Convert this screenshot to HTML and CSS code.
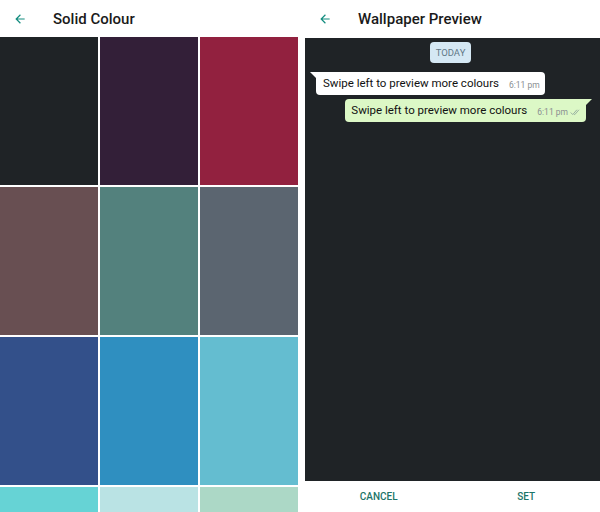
FILE: index.html
```html
<!DOCTYPE html>
<html lang="en">
<head>
	<meta charset="UTF-8">
	<title>Wallpaper</title>
	<link rel="stylesheet" href="styles.css">
</head>
<body>
	<div id="solid">
		<div class="appbar">
			<svg class="back" width="14" height="14" viewBox="0 0 24 24"><path d="M20 11H7.83l5.59-5.59L12 4l-8 8 8 8 1.41-1.41L7.83 13H20v-2z" fill="#128c7e"/></svg>
			<span class="title">Solid Colour</span>
		</div>
		<ul class="swatches">
			<li style="background:#1f2326"></li>
			<li style="background:#331f38"></li>
			<li style="background:#92213f"></li>
			<li style="background:#684f52"></li>
			<li style="background:#53817d"></li>
			<li style="background:#5b6570"></li>
			<li style="background:#33508a"></li>
			<li style="background:#2f8fc0"></li>
			<li style="background:#64bdd0"></li>
			<li style="background:#66d3d5"></li>
			<li style="background:#bae3e4"></li>
			<li style="background:#acd8c6"></li>
		</ul>
	</div>
	<div id="preview">
		<div class="appbar">
			<svg class="back" width="14" height="14" viewBox="0 0 24 24"><path d="M20 11H7.83l5.59-5.59L12 4l-8 8 8 8 1.41-1.41L7.83 13H20v-2z" fill="#128c7e"/></svg>
			<span class="title">Wallpaper Preview</span>
		</div>
		<div class="chat">
			<div class="day">TODAY</div>
			<div class="msg in">
				<span class="text">Swipe left to preview more colours</span>
				<span class="time">6:11 pm</span>
			</div>
			<div class="msg out">
				<span class="text">Swipe left to preview more colours</span>
				<span class="time">6:11 pm
					<svg width="11" height="7" viewBox="0 0 16 10"><path d="M1 5l3 3 6-7M6 8l1 0 6-7" fill="none" stroke="#8aa39a" stroke-width="1.2"/></svg>
				</span>
			</div>
		</div>
		<div class="actions">
			<span>CANCEL</span>
			<span>SET</span>
		</div>
	</div>
</body>
</html>
```

FILE: styles.css
```css
*{
	margin: 0;
	padding: 0;
}
ul, ol{
	list-style: none;
}
html, body{
	height: 512px;
	overflow: hidden;
}
body{
	display: flex;
	width: 600px;
	background: #fff;
	font-family: Roboto, "Liberation Sans", sans-serif;
}
#solid{
	width: 305px;
	height: 512px;
	overflow: hidden;
	flex: none;
}
#preview{
	flex: 1;
	height: 512px;
	display: flex;
	flex-direction: column;
}
.appbar{
	height: 37px;
	display: flex;
	align-items: center;
	padding-left: 13px;
}
#preview .appbar{
	height: 38px;
}
.back{
	margin-right: 26px;
}
.title{
	font-size: 15px;
	font-weight: 500;
	color: #1a1a1a;
}
.swatches{
	display: grid;
	grid-template-columns: repeat(3, 98px);
	grid-auto-rows: 148px;
	gap: 2px;
}
.chat{
	height: 439px;
	background: #1f2326;
	display: flex;
	flex-direction: column;
	padding: 4px 12px 0 8px;
}
.day{
	align-self: center;
	background: #d5e8f4;
	color: #627887;
	font-size: 9.5px;
	padding: 5px 6px;
	border-radius: 4px;
	margin-bottom: 9px;
}
.msg{
	position: relative;
	display: flex;
	align-items: flex-end;
	border-radius: 4px;
	padding: 4px 5px 5px 7px;
	margin-bottom: 4px;
	font-size: 11.5px;
	color: #111;
}
.msg .time{
	font-size: 8.5px;
	color: #8a8f92;
	margin-left: 10px;
	display: flex;
	align-items: center;
	gap: 2px;
}
.in{
	align-self: flex-start;
	background: #fff;
	border-top-left-radius: 0;
	margin-left: 3px;
}
.in::before{
	content: "";
	position: absolute;
	left: -6px;
	top: 0;
	border-top: 7px solid #fff;
	border-left: 7px solid transparent;
}
.out{
	align-self: flex-end;
	background: #dcf8c6;
	border-top-right-radius: 0;
	padding-left: 6px;
	margin-right: 2px;
}
.out::after{
	content: "";
	position: absolute;
	right: -6px;
	top: 0;
	border-top: 7px solid #dcf8c6;
	border-right: 7px solid transparent;
}
.actions{
	flex: 1;
	display: flex;
	align-items: center;
}
.actions span{
	flex: 1;
	text-align: center;
	font-size: 10px;
	font-weight: 500;
	color: #1d7569;
}
```
